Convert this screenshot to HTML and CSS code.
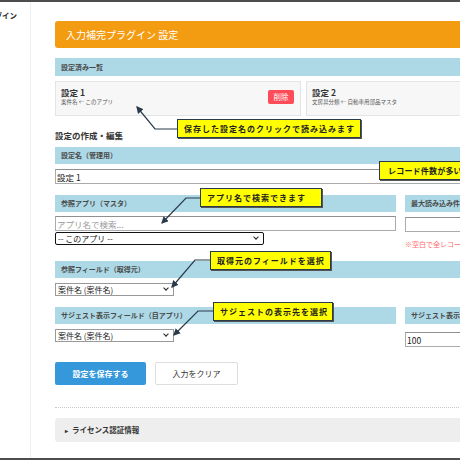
FILE: index.html
```html
<!DOCTYPE html>
<html>

    <head>
        <title>入力補完プラグイン 設定</title>
        <meta name="viewport" content="width=device-width, initial-scale=1.0">
        <link rel="stylesheet" href="styles.css">
    </head>

    <body>
        <div class="screen">
            <div class="frame">
                <aside class="side">
                    <div class="side-title">プラグイン</div>
                </aside>

                <main class="main">
                    <div class="page-head">入力補完プラグイン 設定</div>

                    <div class="bar">設定済み一覧</div>
                    <div class="cards">
                        <div class="card">
                            <div class="card-text">
                                <div class="card-title">設定 1</div>
                                <div class="card-sub">案件名 ← このアプリ</div>
                            </div>
                            <button class="btn-delete">削除</button>
                        </div>
                        <div class="card">
                            <div class="card-text">
                                <div class="card-title">設定 2</div>
                                <div class="card-sub">文房具分類 ← 自動車用部品マスタ</div>
                            </div>
                        </div>
                    </div>

                    <div class="sub-title">設定の作成・編集</div>

                    <div class="field first">
                        <div class="bar">設定名（管理用）</div>
                        <input type="text" class="text-input wide" value="設定 1">
                    </div>

                    <div class="row">
                        <div class="col-left">
                            <div class="bar">参照アプリ（マスタ）</div>
                            <input type="text" class="text-input search" placeholder="アプリ名で検索...">
                            <div class="select focused">-- このアプリ --</div>
                        </div>
                        <div class="col-right">
                            <div class="bar">最大読み込み件数</div>
                            <input type="text" class="text-input side-input" value="">
                            <div class="note">※空白で全レコードを読み込みます</div>
                        </div>
                    </div>

                    <div class="field">
                        <div class="bar">参照フィールド（取得元）</div>
                        <div class="select small">案件名 (案件名)</div>
                    </div>

                    <div class="row">
                        <div class="col-left">
                            <div class="bar">サジェスト表示フィールド（自アプリ）</div>
                            <div class="select small">案件名 (案件名)</div>
                        </div>
                        <div class="col-right">
                            <div class="bar">サジェスト表示件数</div>
                            <input type="text" class="text-input side-input count" value="100">
                        </div>
                    </div>

                    <div class="actions">
                        <button class="btn btn-save">設定を保存する</button>
                        <button class="btn btn-clear">入力をクリア</button>
                    </div>

                    <div class="divider"></div>

                    <div class="license"><span class="caret">&#9656;</span>ライセンス認証情報</div>
                </main>
            </div>

            <!-- annotations -->
            <svg class="arrows" width="460" height="460" viewBox="0 0 460 460">
                <defs>
                    <marker id="head" markerWidth="6" markerHeight="6" refX="5" refY="3" orient="auto">
                        <path d="M0,0 L6,3 L0,6 Z" fill="#2b3a4a"/>
                    </marker>
                </defs>
                <polyline points="177,129 155,129 137,107" marker-end="url(#head)"/>
                <polyline points="200,198 186,198 162,223" marker-end="url(#head)"/>
                <polyline points="210,260 195,260 172,287" marker-end="url(#head)"/>
                <polyline points="213,311 198,311 174,335" marker-end="url(#head)"/>
            </svg>

            <div class="callout c1">保存した設定名のクリックで読み込みます</div>
            <div class="callout c2">アプリ名で検索できます</div>
            <div class="callout c3">取得元のフィールドを選択</div>
            <div class="callout c4">サジェストの表示先を選択</div>
            <div class="callout c5">レコード件数が多い場合に設定</div>
        </div>
    </body>

</html>
```

FILE: styles.css
```css
body {
    margin: 0;
    font-family: "Noto Sans CJK JP", "Noto Sans", sans-serif;
    color: #333;
}

.screen {
    position: relative;
    width: 460px;
    height: 460px;
    box-sizing: border-box;
    border-top: 2px solid #4d4d4d;
    border-bottom: 2px solid #4d4d4d;
    overflow: hidden;
    background: #fff;
}

.frame {
    display: flex;
    height: 100%;
}

.side {
    flex: none;
    width: 31px;
    border-right: 1px solid #eeeeee;
    display: flex;
    justify-content: flex-end;
    padding-right: 13px;
    box-sizing: border-box;
    overflow: hidden;
}

.side-title {
    margin-top: 9px;
    font-size: 7.5px;
    font-weight: 700;
    line-height: 10px;
    white-space: nowrap;
    color: #222;
}

.main {
    flex: none;
    width: 560px;
    padding: 19px 0 0 24px;
}

.page-head {
    height: 27px;
    line-height: 27px;
    padding-left: 11px;
    background: #f39c12;
    border-radius: 3px;
    color: #fff;
    font-size: 10px;
}

.bar {
    height: 17px;
    line-height: 17px;
    padding-left: 6px;
    background: #add8e6;
    font-size: 7px;
    font-weight: 700;
    color: #4a4a4a;
    white-space: nowrap;
    overflow: hidden;
}

.main > .bar {
    margin-top: 10px;
    height: 18px;
    line-height: 18px;
}

.cards {
    display: flex;
    gap: 5px;
    margin-top: 5px;
}

.card {
    width: 246px;
    height: 35px;
    box-sizing: border-box;
    border: 1px solid #e4e4e4;
    background: #f7f7f7;
    padding: 5px 6px 0 5px;
    display: flex;
    justify-content: space-between;
    align-items: flex-start;
}

.card-title {
    font-size: 8.5px;
    font-weight: 700;
    line-height: 11px;
    color: #333;
}

.card-sub {
    font-size: 5.5px;
    line-height: 8px;
    color: #555;
    white-space: nowrap;
}

.btn-delete {
    margin-top: 3px;
    width: 26px;
    height: 14px;
    padding: 0;
    border: none;
    border-radius: 2px;
    background: #fd4b57;
    color: #fff;
    font-family: inherit;
    font-size: 7.5px;
    line-height: 14px;
}

.sub-title {
    margin-top: 13px;
    font-size: 8.5px;
    font-weight: 700;
    line-height: 13px;
    color: #333;
}

.field {
    margin-top: 11px;
}

.field.first {
    margin-top: 5px;
}

.text-input {
    display: block;
    box-sizing: border-box;
    height: 15px;
    padding: 0 1px;
    border: 1px solid #ababab;
    border-top-color: #8f8f8f;
    font-family: inherit;
    font-size: 8.5px;
    color: #222;
    margin: 5px 0 0;
}

.text-input::placeholder {
    color: #9a9a9a;
}

.text-input.wide {
    width: 100%;
}

.text-input.search {
    width: 100%;
    margin-top: 4px;
}

.row {
    display: flex;
    gap: 9px;
    margin-top: 11px;
    align-items: flex-start;
}

.col-left {
    width: 341px;
    flex: none;
}

.col-right {
    width: 200px;
    flex: none;
}

.side-input {
    width: 100%;
}

.side-input.count {
    margin-top: 8px;
}

.note {
    margin-top: 7px;
    font-size: 7px;
    line-height: 11px;
    color: #ff6b6b;
    white-space: nowrap;
}

.select {
    position: relative;
    box-sizing: border-box;
    height: 13px;
    line-height: 11px;
    padding-left: 2px;
    border: 1px solid #999;
    font-size: 8px;
    color: #222;
    margin-top: 5px;
    white-space: nowrap;
}

.select::after {
    content: "";
    position: absolute;
    right: 5px;
    top: 2px;
    width: 3px;
    height: 3px;
    border-right: 1.5px solid #222;
    border-bottom: 1.5px solid #222;
    transform: rotate(45deg);
}

.select.focused {
    width: 209px;
    margin-top: 1px;
    border-color: #111;
    border-radius: 2px;
}

.select.small {
    width: 119px;
}

.actions {
    display: flex;
    gap: 9px;
    margin-top: 15px;
}

.btn {
    height: 23px;
    border-radius: 2px;
    font-family: inherit;
    font-size: 8px;
    padding: 0;
}

.btn-save {
    width: 91px;
    border: none;
    background: #3498db;
    color: #fff;
    font-weight: 700;
}

.btn-clear {
    width: 83px;
    border: 1px solid #ddd;
    background: #fff;
    color: #333;
}

.divider {
    margin-top: 22px;
    border-top: 1px dotted #c8c8c8;
}

.license {
    margin-top: 10px;
    height: 24px;
    line-height: 24px;
    padding-left: 10px;
    background: #eeeeee;
    border-radius: 3px;
    font-size: 7.5px;
    font-weight: 700;
    color: #333;
}

.caret {
    font-size: 6px;
    margin-right: 4px;
}

.arrows {
    position: absolute;
    left: 0;
    top: -2px;
}

.arrows polyline {
    fill: none;
    stroke: #2b3a4a;
    stroke-width: 1.2;
}

.callout {
    position: absolute;
    box-sizing: border-box;
    height: 19px;
    line-height: 17px;
    padding-left: 6px;
    background: #ffff00;
    border: 1px solid #2b3a4a;
    box-shadow: 1px 1px 0 #555;
    font-size: 8px;
    font-weight: 700;
    letter-spacing: 1px;
    color: #222;
    white-space: nowrap;
}

.c1 {
    left: 177px;
    top: 117px;
    width: 184px;
}

.c2 {
    left: 200px;
    top: 186px;
    width: 122px;
}

.c3 {
    left: 210px;
    top: 249px;
    width: 121px;
}

.c4 {
    left: 213px;
    top: 300px;
    width: 120px;
}

.c5 {
    left: 379px;
    top: 159px;
    width: 130px;
    padding-left: 8px;
    letter-spacing: 0.2px;
}
```
